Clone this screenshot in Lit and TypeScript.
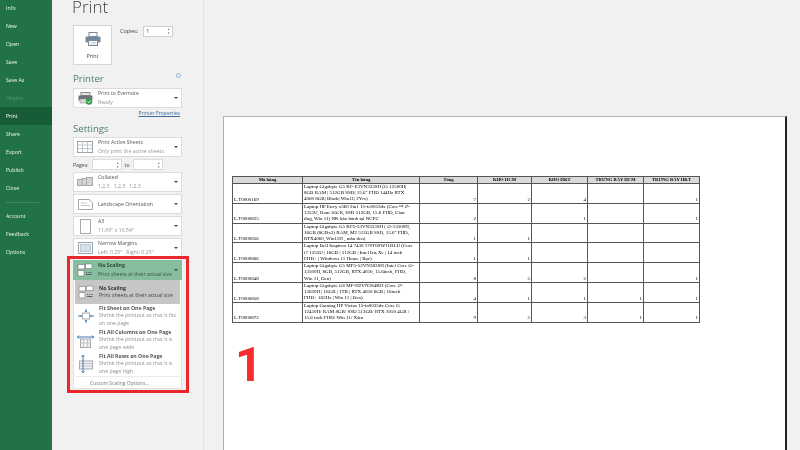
import { LitElement, css, html, svg } from "lit";
import { customElement } from "lit/decorators.js";

const NAV = [
  ["Info"], ["New"], ["Open"], ["Save"], ["Save As"], ["History", "off"], ["Print", "on"],
  ["Share"], ["Export"], ["Publish"], ["Close"],
];

const ROWS = [
  ["L.T0000169", 'Laptop Gigabyte G5 KF-E3VN333SH (i5 12500H|\n8GB RAM | 512GB SSD| 15.6" FHD 144Hz RTX\n4060 8GB| Black| Win11| 2Yrs)', "7", "2", "4", "", "1"],
  ["L.T0000825", "Laptop HP Envy x360 2in1 15-fe0053dx (Core™ i7-\n1355U, Ram 16GB, SSD 512GB, 15.6 FHD, Cảm\nứng, Win 11) NK bảo hành tại NCPC", "2", "", "1", "", "1"],
  ["L.T0000856", 'Laptop Gigabyte G5 KF5-53VN353SH ( i5-13500H,\n16GB (8GBx2) RAM, M2 512GB SSD, 15.6" FHD,\nRTX4060, Win11H , màu đen)', "1", "1", "", "", ""],
  ["L.T0000866", "Laptop Dell Inspiron 14 7430 170T6SW11BLU (Core\ni7 1355U | 16GB | 512GB | Intel Iris Xe | 14 inch\nFHD+ | Windows 11 Home | Bạc)", "1", "1", "", "", ""],
  ["L.T0000848", "Laptop Gigabyte G5 MF5-52VN383SH (Intel Core i5-\n13500H, 8GB, 512GB, RTX 4050, 15.6inch, FHD,\nWin 11, Đen)", "8", "5", "2", "", "1"],
  ["L.T0000858", "Laptop Gigabyte G6 MF-H2VN3S4KH (Core i7-\n13620H | 16GB | 1TB | RTX 4050 6GB | 16inch\nFHD+ 165Hz | Win 11 | Đen)", "4", "1", "1", "1", "1"],
  ["L.T0000872", "Laptop Gaming HP Victus 15-fa0035dx Core i5\n12450H/ RAM 8GB/ SSD 512GB/ RTX 3050 4GB /\n15.6 inch FHD/ Win 11/ Xám", "9", "5", "3", "1", "1"],
];

const HEAD = ["Mã hàng", "Tên hàng", "Tổng", "KHO HCM", "KHO HKT", "TRƯNG BÀY HCM", "TRƯNG BÀY HKT"];

const icon = (w: number, h: number, body: unknown) =>
  html`<svg width=${w} height=${h} viewBox="0 0 ${w} ${h}">${body}</svg>`;

const sheets = icon(16, 12, svg`
  <rect x=".5" y=".5" width="15" height="11" fill="#fff" stroke="#9aa3aa"/>
  <path d="M.5 4h15M.5 7.500h15M5.500 .5v11M10.500 .5v11" stroke="#c4c9cd" fill="none"/>`);
const collated = icon(16, 10, svg`
  <rect x=".5" y="2.500" width="6" height="6" fill="#d6d6d6" stroke="#a8a8a8"/>
  <rect x="5" y="1.500" width="6" height="7" fill="#d6d6d6" stroke="#a8a8a8"/>
  <rect x="9.500" y=".5" width="6" height="8" fill="#d6d6d6" stroke="#a8a8a8"/>`);
const landscape = icon(15, 11, svg`
  <path d="M.5 .5H11l3.500 3v7H.5z" fill="#fff" stroke="#a8a8a8"/>
  <path d="M3 4h6M3 6.500h9" stroke="#c9c9c9"/>`);
const portrait = icon(11, 15, svg`<rect x=".5" y=".5" width="10" height="14" fill="#fff" stroke="#a8a8a8"/>`);
const margins = icon(15, 12, svg`
  <rect x=".5" y=".5" width="14" height="11" fill="#fff" stroke="#98a4ae"/>
  <rect x="2.500" y="2.500" width="10" height="7" fill="#d5e0ea" stroke="#b7c6d3"/>`);
const scaling = icon(16, 14, svg`
  <path d="M1 1.500h6.500V6H1zM8.500 1H15v4.500H8.500z" fill="#fff" stroke="#777" stroke-width=".6"/>
  <path d="M1 7.500h6v5.500H1z" fill="#fff" stroke="#777" stroke-width=".6"/>
  <path d="M9 9.500h1M11 9.500h1M13 9.500h1.500M9 11.500h5.500" stroke="#444" stroke-width=".8"/>`);
const printerSmall = icon(15, 13, svg`
  <rect x="3" y=".5" width="9" height="3" fill="#e6e6e6" stroke="#8a8a8a"/>
  <rect x=".5" y="3.500" width="14" height="5" fill="#6f7479"/>
  <rect x="2" y="7" width="10" height="4" fill="#d9d9d9" stroke="#8a8a8a" stroke-width=".5"/>
  <circle cx="11" cy="9.500" r="3.200" fill="#2f9e44"/>
  <path d="M9.500 9.500l1.200 1.200 2-2.200" stroke="#fff" fill="none"/>`);
const printerBig = icon(16, 14, svg`
  <rect x="4" y=".5" width="8" height="4" fill="#fff" stroke="#7d8b99"/>
  <rect x=".5" y="4.500" width="15" height="6" rx="1" fill="#73889c"/>
  <rect x="3.500" y="8.500" width="9" height="5" fill="#fff" stroke="#7d8b99"/>
  <path d="M5 10.500h6M5 12h6" stroke="#a9b5c0" stroke-width=".6"/>`);

const arrow = (d: string) => svg`<path d=${d} fill="none" stroke="#3b78b4" stroke-width="1"/>`;
const fitSheet = icon(16, 14, svg`
  <rect x="4.500" y="4" width="7" height="6" fill="#fff" stroke="#a7a7a7"/>
  ${arrow("M0 7h3.500M2.500 6l1 1-1 1M16 7h-3.500M13.500 6l-1 1 1 1M8 0v3M7 2l1 1 1-1M8 14v-3M7 12l1-1 1 1")}`);
const fitCols = icon(17, 15, svg`
  <rect x="3.500" y="6" width="10" height="8.500" fill="#eef2f6" stroke="#a7a7a7"/>
  <path d="M6.500 6v8.500M10.500 6v8.500M3.500 10h10" stroke="#c5c5c5"/>
  ${arrow("M0 4h17M2 2.500L.5 4 2 5.500M15 2.500L16.500 4 15 5.500")}`);
const fitRows = icon(15, 18, svg`
  <rect x="1.500" y="6" width="13" height="8" fill="#eef2f6" stroke="#a7a7a7"/>
  <path d="M1.500 8.500h13M1.500 11h13" stroke="#c5c5c5"/>
  ${arrow("M5 0v18M3.500 1.500L5 .5l1.500 1M3.500 16.500L5 17.500l1.500-1")}`);

@customElement("app-root")
export class AppRoot extends LitElement {
  static styles = css`
    :host {
      display: flex;
      width: 800px;
      height: 450px;
      overflow: hidden;
      background: #f1f1f1;
      font-family: "Open Sans", "Liberation Sans", sans-serif;
      color: #444;
      font-size: 5.2px;
      filter: blur(0.3px);
    }
    svg { display: block; flex: none; }

    .nav {
      width: 52px;
      flex: none;
      background: #217346;
      color: #f0f6f2;
      font-size: 5.2px;
      margin-top: -1px;
      height: 451px;
    }
    .nav div { height: 18px; line-height: 18px; padding-left: 6px; }
    .nav .on { background: #185c37; color: #fff; }
    .nav .off { color: #5b9a78; }
    .nav hr { border: 0; border-top: 1px solid #3d8860; margin: 5px 13px 4px 6px; }

    .panel {
      width: 152px;
      flex: none;
      box-sizing: border-box;
      padding-left: 21px;
      border-right: 1px solid #e2e2e2;
    }
    h1 {
      margin: 0 0 0 -1px;
      height: 20px;
      font-size: 17px;
      line-height: 14px;
      font-weight: 300;
      color: #444;
    }
    .top { display: flex; margin-top: 5px; width: 109px; }
    .print-btn {
      width: 39px;
      height: 40px;
      box-sizing: border-box;
      background: #fff;
      border: 1px solid #d4d4d4;
      display: flex;
      flex-direction: column;
      align-items: center;
      padding-top: 6px;
      gap: 6px;
      font-size: 5.4px;
    }
    .copies { display: flex; align-items: center; gap: 5px; margin: 1px 0 0 8px; height: 10px; font-size: 5.4px; }
    .spin {
      box-sizing: border-box;
      background: #fff;
      border: 1px solid #d0d0d0;
      height: 11px;
      display: flex;
      justify-content: space-between;
      align-items: center;
      padding: 0 2px;
      font-size: 5.4px;
    }
    .spin i { margin-left: auto; font-style: normal; font-size: 3px; line-height: 4px; color: #444; text-align: center; }
    .copies .spin { width: 30px; }

    h2 {
      margin: 0;
      font-size: 9.6px;
      line-height: 14px;
      font-weight: 400;
      color: #4d7f67;
    }
    .head-row { display: flex; justify-content: space-between; width: 109px; margin-top: 7px; height: 16px; }
    .info {
      width: 5px;
      height: 5px;
      box-sizing: border-box;
      border: 1px solid #8fb4d8;
      border-radius: 50%;
      margin: 1px 1px 0 0;
    }
    .link {
      width: 107px;
      height: 14px;
      line-height: 10px;
      text-align: right;
      font-size: 5px;
      color: #3e6d9c;
      text-decoration: underline;
    }

    .stack { display: flex; flex-direction: column; gap: 2px; width: 109px; }
    .settings { margin-top: 1px; }
    .dd {
      height: 20px;
      box-sizing: border-box;
      background: #fff;
      border: 1px solid #dcdcdc;
      display: flex;
      align-items: center;
      padding: 0 3px 0 2px;
      line-height: 9px;
    }
    .dd .ic { width: 18px; flex: none; margin-right: 4px; display: flex; justify-content: center; }
    .dd .tx { flex: 1; white-space: nowrap; }
    .dd b { display: block; font-weight: 400; color: #555; }
    .dd span { display: block; color: #949494; }
    .dd u { width: 0; height: 0; border: 2px solid transparent; border-top-color: #444; border-bottom: 0; }
    .dd.green { background: #86bd9f; border-color: #86bd9f; }
    .dd.green b { font-weight: 700; color: #2f4a3b; }
    .dd.green span { color: #35553f; }

    .pages { display: flex; align-items: center; height: 11px; gap: 3px; font-size: 5.2px; }
    .pages .spin { width: 30px; border-color: #dcdcdc; }

    .scale { position: relative; display: flex; flex-direction: column; }
    .scale::after {
      content: "";
      position: absolute;
      inset: -4px -7px -4px -6px;
      border: 3px solid #e8262c;
    }
    .menu {
      height: 109px;
      box-sizing: border-box;
      background: #fff;
      border: 1px solid #e0e0e0;
      border-top: 0;
      padding: 0 1px;
    }
    .opt { display: flex; height: 24px; align-items: center; line-height: 7.4px; color: #8f8f8f; font-size: 5.2px; white-space: nowrap; }
    .opt .ic { width: 24px; box-sizing: border-box; padding-right: 3px; flex: none; display: flex; justify-content: center; }
    .opt b { display: block; color: #555; font-weight: 700; }
    .opt.sel { background: #c6c6c6; color: #3f3f3f; }
    .opt.sel b { color: #333; }
    .custom { height: 13px; line-height: 12px; padding-left: 15px; color: #7a7a7a; font-size: 5px; border-top: 1px solid #ececec; }

    .preview { flex: 1; padding: 116px 0 0 19px; min-width: 0; }
    .page {
      width: 564px;
      height: 340px;
      box-sizing: border-box;
      background: #fff;
      border: 1px solid #b0b0b0;
      border-right: 2px solid #222;
      border-bottom: 0;
      padding: 59px 0 0 8px;
    }
    table {
      width: 467px;
      table-layout: fixed;
      border-collapse: collapse;
      font-family: "Liberation Serif", serif;
      font-size: 5px;
      line-height: 6.2px;
      color: #000;
    }
    th, td { border: 1px solid #555; padding: 0 1px; overflow: hidden; }
    th { height: 6px; background: #d9d9d9; font-size: 4.6px; font-weight: 700; line-height: 6px; text-align: center; white-space: nowrap; }
    td { height: 18.8px; vertical-align: bottom; }
    td.num { text-align: right; }
    td.name { vertical-align: top; white-space: pre-line; }
    .big {
      margin: 18px 0 0 3px;
      font-family: Roboto, sans-serif;
      font-weight: 700;
      font-size: 48px;
      line-height: 48px;
      color: #f72c2e;
    }
  `;

  dropdown(ic: unknown, title: string, sub = "", cls = "") {
    return html`<div class="dd ${cls}">
      <div class="ic">${ic}</div>
      <div class="tx"><b>${title}</b>${sub ? html`<span>${sub}</span>` : ""}</div>
      <u></u>
    </div>`;
  }

  option(ic: unknown, title: string, lines: string[], cls = "") {
    return html`<div class="opt ${cls}">
      <div class="ic">${ic}</div>
      <div><b>${title}</b>${lines.map((l) => html`<div>${l}</div>`)}</div>
    </div>`;
  }

  render() {
    const spinArrows = html`<i>▴<br />▾</i>`;
    return html`
      <div class="nav">
        ${NAV.map(([t, c]) => html`<div class=${c ?? ""}>${t}</div>`)}
        <hr />
        <div>Account</div>
        <div>Feedback</div>
        <div>Options</div>
      </div>

      <div class="panel">
        <h1>Print</h1>
        <div class="top">
          <div class="print-btn">${printerBig}<span>Print</span></div>
          <div class="copies">Copies: <div class="spin">1 ${spinArrows}</div></div>
        </div>

        <div class="head-row"><h2>Printer</h2><div class="info"></div></div>
        <div class="stack">${this.dropdown(printerSmall, "Print to Evernote", "Ready")}</div>
        <div class="link">Printer Properties</div>

        <h2>Settings</h2>
        <div class="stack settings">
          ${this.dropdown(sheets, "Print Active Sheets", "Only print the active sheets")}
          <div class="pages">
            Pages: <div class="spin">${spinArrows}</div> to <div class="spin">${spinArrows}</div>
          </div>
          ${this.dropdown(collated, "Collated", "1,2,3\u00a0\u00a0\u00a01,2,3\u00a0\u00a0\u00a01,2,3")}
          ${this.dropdown(landscape, "Landscape Orientation")}
          ${this.dropdown(portrait, "A3", '11.69" x 16.54"')}
          ${this.dropdown(margins, "Narrow Margins", 'Left: 0.25"\u00a0\u00a0\u00a0Right: 0.25"')}
          <div class="scale">
            ${this.dropdown(scaling, "No Scaling", "Print sheets at their actual size", "green")}
            <div class="menu">
              ${this.option(scaling, "No Scaling", ["Print sheets at their actual size"], "sel")}
              ${this.option(fitSheet, "Fit Sheet on One Page", ["Shrink the printout so that it fits", "on one page"])}
              ${this.option(fitCols, "Fit All Columns on One Page", ["Shrink the printout so that it is", "one page wide"])}
              ${this.option(fitRows, "Fit All Rows on One Page", ["Shrink the printout so that it is", "one page high"])}
              <div class="custom">Custom Scaling Options...</div>
            </div>
          </div>
        </div>
      </div>

      <div class="preview">
        <div class="page">
          <table>
            <colgroup>
              <col style="width:70px" /><col style="width:117px" /><col style="width:58px" />
              <col style="width:54px" /><col style="width:56px" /><col style="width:56px" /><col style="width:56px" />
            </colgroup>
            <tr>${HEAD.map((h) => html`<th>${h}</th>`)}</tr>
            ${ROWS.map(
              ([id, name, ...nums]) => html`<tr>
                <td>${id}</td>
                <td class="name">${name}</td>
                ${nums.map((n) => html`<td class="num">${n}</td>`)}
              </tr>`
            )}
          </table>
          <div class="big">1</div>
        </div>
      </div>
    `;
  }
}
